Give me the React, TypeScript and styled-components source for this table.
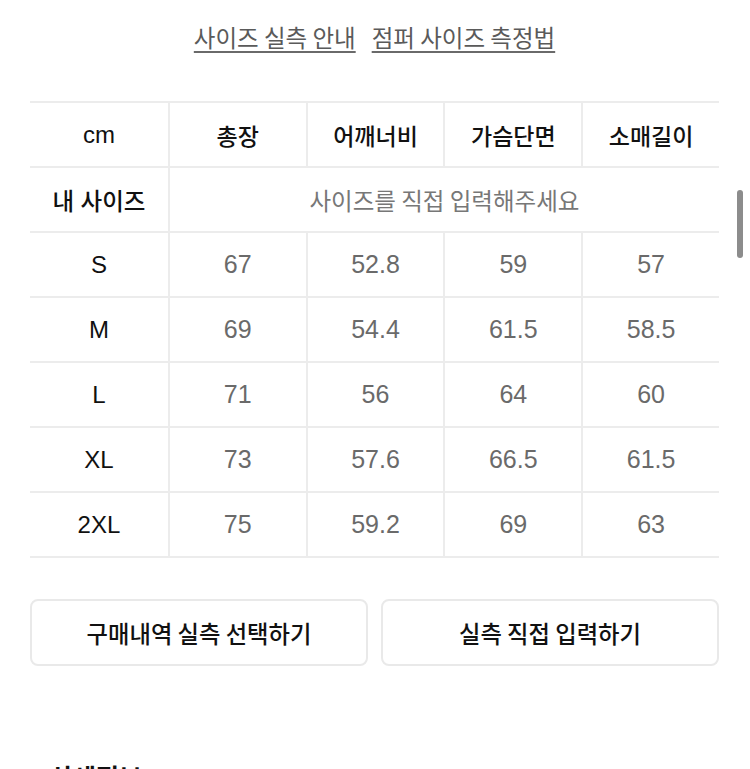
import React from "react";
import styled, { createGlobalStyle } from "styled-components";

const GlobalStyle = createGlobalStyle`
  html, body {
    margin: 0;
    padding: 0;
    background: #ffffff;
    overflow: hidden;
  }
  body {
    font-family: "Liberation Sans", "Noto Sans CJK KR", sans-serif;
    color: #111111;
  }
  * { box-sizing: border-box; }
`;

const Page = styled.div`
  padding: 0 31px 0 30px;
  width: 750px;
`;

const LinkRow = styled.div`
  display: flex;
  justify-content: center;
  gap: 16px;
  padding-top: 24px;
`;

const GuideLink = styled.a`
  font-family: "Noto Sans CJK KR", sans-serif;
  font-size: 23.5px;
  line-height: 26px;
  letter-spacing: 0;
  color: #5a5a5a;
  text-decoration: underline;
  text-decoration-thickness: 2px;
  text-underline-offset: 4px;
  text-decoration-color: #6a6a6a;
  cursor: pointer;
`;

const SizeTable = styled.div`
  margin-top: 51px;
  border-top: 2px solid #ececec;
`;

const Row = styled.div`
  display: grid;
  grid-template-columns: repeat(5, 1fr);
  height: 65px;
  border-bottom: 2px solid #ececec;
`;

const Cell = styled.div<{ $kind: "head" | "label" | "value"; $span?: number; $first?: boolean }>`
  display: flex;
  align-items: center;
  justify-content: center;
  grid-column: span ${(p) => p.$span ?? 1};
  border-left: ${(p) => (p.$first ? "none" : "2px solid #ececec")};
  font-family: "Liberation Sans", "Noto Sans CJK KR", sans-serif;
  font-size: ${(p) => (p.$kind === "value" ? "25px" : p.$kind === "head" ? "23px" : "23.5px")};
  font-weight: ${(p) => (p.$kind === "value" ? 400 : 500)};
  letter-spacing: 0;
  color: ${(p) => (p.$kind === "value" ? "#6a6a6a" : "#111111")};
  white-space: nowrap;
`;

const LatinLabel = styled.span`
  font-size: 24px;
  font-weight: 400;
`;

const Placeholder = styled.span`
  font-family: "Noto Sans CJK KR", sans-serif;
  font-size: 23.5px;
  font-weight: 400;
  color: #777777;
`;

const ButtonRow = styled.div`
  display: grid;
  grid-template-columns: 1fr 1fr;
  gap: 13px;
  margin-top: 41px;
`;

const ActionButton = styled.button`
  height: 67px;
  background: #ffffff;
  border: 2px solid #e9e9e9;
  border-radius: 8px;
  font-family: "Noto Sans CJK KR", sans-serif;
  font-size: 23.3px;
  font-weight: 500;
  color: #111111;
  cursor: pointer;
`;

const SectionTitle = styled.h2`
  margin: 95px 0 0;
  padding-left: 20px;
  font-family: "Noto Sans CJK KR", sans-serif;
  font-size: 25px;
  font-weight: 700;
  line-height: 30px;
  color: #111111;
`;

const ScrollThumb = styled.div`
  position: fixed;
  right: 7px;
  top: 190px;
  width: 6px;
  height: 68px;
  border-radius: 3px;
  background: #8c8c8c;
`;

const headers = ["총장", "어깨너비", "가슴단면", "소매길이"];

const rows: { size: string; values: string[] }[] = [
  { size: "S", values: ["67", "52.8", "59", "57"] },
  { size: "M", values: ["69", "54.4", "61.5", "58.5"] },
  { size: "L", values: ["71", "56", "64", "60"] },
  { size: "XL", values: ["73", "57.6", "66.5", "61.5"] },
  { size: "2XL", values: ["75", "59.2", "69", "63"] },
];

export default function App() {
  return (
    <>
      <GlobalStyle />
      <Page>
        <LinkRow>
          <GuideLink>사이즈 실측 안내</GuideLink>
          <GuideLink>점퍼 사이즈 측정법</GuideLink>
        </LinkRow>

        <SizeTable>
          <Row>
            <Cell $kind="head" $first>
              <LatinLabel>cm</LatinLabel>
            </Cell>
            {headers.map((h) => (
              <Cell key={h} $kind="head">
                {h}
              </Cell>
            ))}
          </Row>
          <Row>
            <Cell $kind="label" $first>
              내 사이즈
            </Cell>
            <Cell $kind="label" $span={4}>
              <Placeholder>사이즈를 직접 입력해주세요</Placeholder>
            </Cell>
          </Row>
          {rows.map((r) => (
            <Row key={r.size}>
              <Cell $kind="label" $first>
                <LatinLabel>{r.size}</LatinLabel>
              </Cell>
              {r.values.map((v, i) => (
                <Cell key={i} $kind="value">
                  {v}
                </Cell>
              ))}
            </Row>
          ))}
        </SizeTable>

        <ButtonRow>
          <ActionButton>구매내역 실측 선택하기</ActionButton>
          <ActionButton>실측 직접 입력하기</ActionButton>
        </ButtonRow>

        <SectionTitle>상세정보</SectionTitle>
      </Page>
      <ScrollThumb />
    </>
  );
}
